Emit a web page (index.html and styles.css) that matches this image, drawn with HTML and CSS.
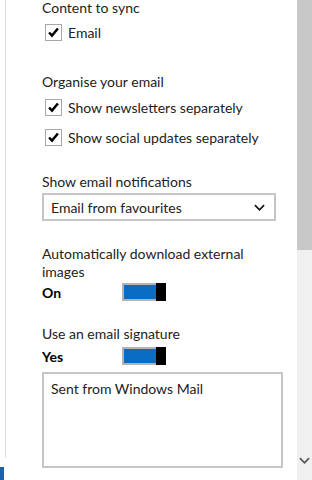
FILE: index.html
```html
<!DOCTYPE html>
<html lang="en">
<head>
  <meta charset="UTF-8" />
  <meta name="viewport" content="width=device-width, initial-scale=1.0" />
  <title>Mail options</title>
  <link rel="stylesheet" href="styles.css">
</head>
<body>
  <div class="screen">
    <div class="edge">
      <div class="edge-tile"></div>
    </div>

    <div class="pane">
      <div class="group group-sync">
        <div class="heading">Content to sync</div>
        <label class="check">
          <span class="box"><svg viewBox="0 0 17 17"><path d="M3.5 8.5 L6.8 12 L13.5 4" /></svg></span>
          Email
        </label>
      </div>

      <div class="group group-organise">
        <div class="heading">Organise your email</div>
        <label class="check">
          <span class="box"><svg viewBox="0 0 17 17"><path d="M3.5 8.5 L6.8 12 L13.5 4" /></svg></span>
          Show newsletters separately
        </label>
        <label class="check">
          <span class="box"><svg viewBox="0 0 17 17"><path d="M3.5 8.5 L6.8 12 L13.5 4" /></svg></span>
          Show social updates separately
        </label>
      </div>

      <div class="group group-notify">
        <div class="heading">Show email notifications</div>
        <div class="select">
          <span>Email from favourites</span>
          <svg class="chevron" viewBox="0 0 12 7"><path d="M1 1 L6 6 L11 1" /></svg>
        </div>
      </div>

      <div class="group group-images">
        <div class="heading">Automatically download external<br>images</div>
        <div class="switch-row">
          <span class="state">On</span>
          <span class="toggle"><span class="track"></span><span class="thumb"></span></span>
        </div>
      </div>

      <div class="group group-signature">
        <div class="heading">Use an email signature</div>
        <div class="switch-row">
          <span class="state">Yes</span>
          <span class="toggle"><span class="track"></span><span class="thumb"></span></span>
        </div>
        <div class="signature">Sent from Windows Mail</div>
      </div>
    </div>

    <div class="scrollbar">
      <div class="thumb-bar"></div>
      <div class="rail">
        <svg class="down" viewBox="0 0 12 7"><path d="M1 1 L6 6 L11 1" /></svg>
      </div>
    </div>
  </div>
</body>
</html>
```

FILE: styles.css
```css
body {
  margin: 0;
  font-family: 'Lato', sans-serif;
  font-size: 14px;
  color: #222;
  background: #fff;
}
.screen {
  display: flex;
  width: 312px;
  height: 480px;
  overflow: hidden;
}
.edge {
  width: 5px;
  display: flex;
  flex-direction: column;
  justify-content: flex-end;
}
.edge-tile {
  width: 4px;
  height: 13px;
  background: #1a62ad;
}
.pane {
  flex: 1;
  border-left: 1px solid #dcdcdc;
  padding-left: 36px;
  margin-bottom: 22px;
}
.heading {
  line-height: 18px;
}
.group-sync {
  margin-top: -1px;
}
.group-organise {
  margin-top: 32px;
}
.group-notify {
  margin-top: 27px;
}
.group-images {
  margin-top: 24px;
}
.group-signature {
  margin-top: 24px;
}
.check {
  display: flex;
  align-items: center;
  gap: 6px;
  height: 18px;
  margin-top: 6px;
  margin-left: 3px;
}
.group-organise .check {
  margin-top: 7px;
}
.group-organise .check + .check {
  margin-top: 12px;
}
.box {
  width: 15px;
  height: 15px;
  border: 1px solid #a8a8a8;
  background: #fff;
  display: flex;
}
.box svg {
  width: 15px;
  height: 15px;
}
.box path {
  fill: none;
  stroke: #000;
  stroke-width: 2.8;
}
.select {
  margin-top: 2px;
  height: 24px;
  border: 2px solid #c6c6c6;
  display: flex;
  align-items: center;
  justify-content: space-between;
  padding: 0 9px 0 7px;
  width: 214px;
}
.chevron {
  width: 11px;
  height: 7px;
}
.chevron path,
.down path {
  fill: none;
  stroke: #111;
  stroke-width: 1.8;
}
.switch-row {
  display: flex;
  align-items: center;
  height: 18px;
  margin-top: 2px;
}
.group-signature .switch-row {
  margin-top: 4px;
}
.state {
  width: 80px;
  font-weight: bold;
  color: #000;
}
.toggle {
  display: flex;
  width: 44px;
  height: 18px;
}
.track {
  flex: 1;
  border: 2px solid #b4b4b4;
  border-right: none;
  background: #0b6cc3;
}
.thumb {
  width: 10px;
  background: #000;
}
.signature {
  margin-top: 7px;
  width: 230px;
  height: 86px;
  border: 2px solid #c6c6c6;
  padding: 6px 0 0 7px;
  line-height: 18px;
}
.scrollbar {
  width: 15px;
  display: flex;
  flex-direction: column;
}
.thumb-bar {
  height: 250px;
  background: #c8c8c8;
}
.rail {
  flex: 1;
  background: #f0f0f0;
  display: flex;
  flex-direction: column;
  justify-content: flex-end;
  align-items: center;
  padding-bottom: 16px;
}
.down {
  width: 11px;
  height: 7px;
}
.down path {
  stroke: #555;
}
```
